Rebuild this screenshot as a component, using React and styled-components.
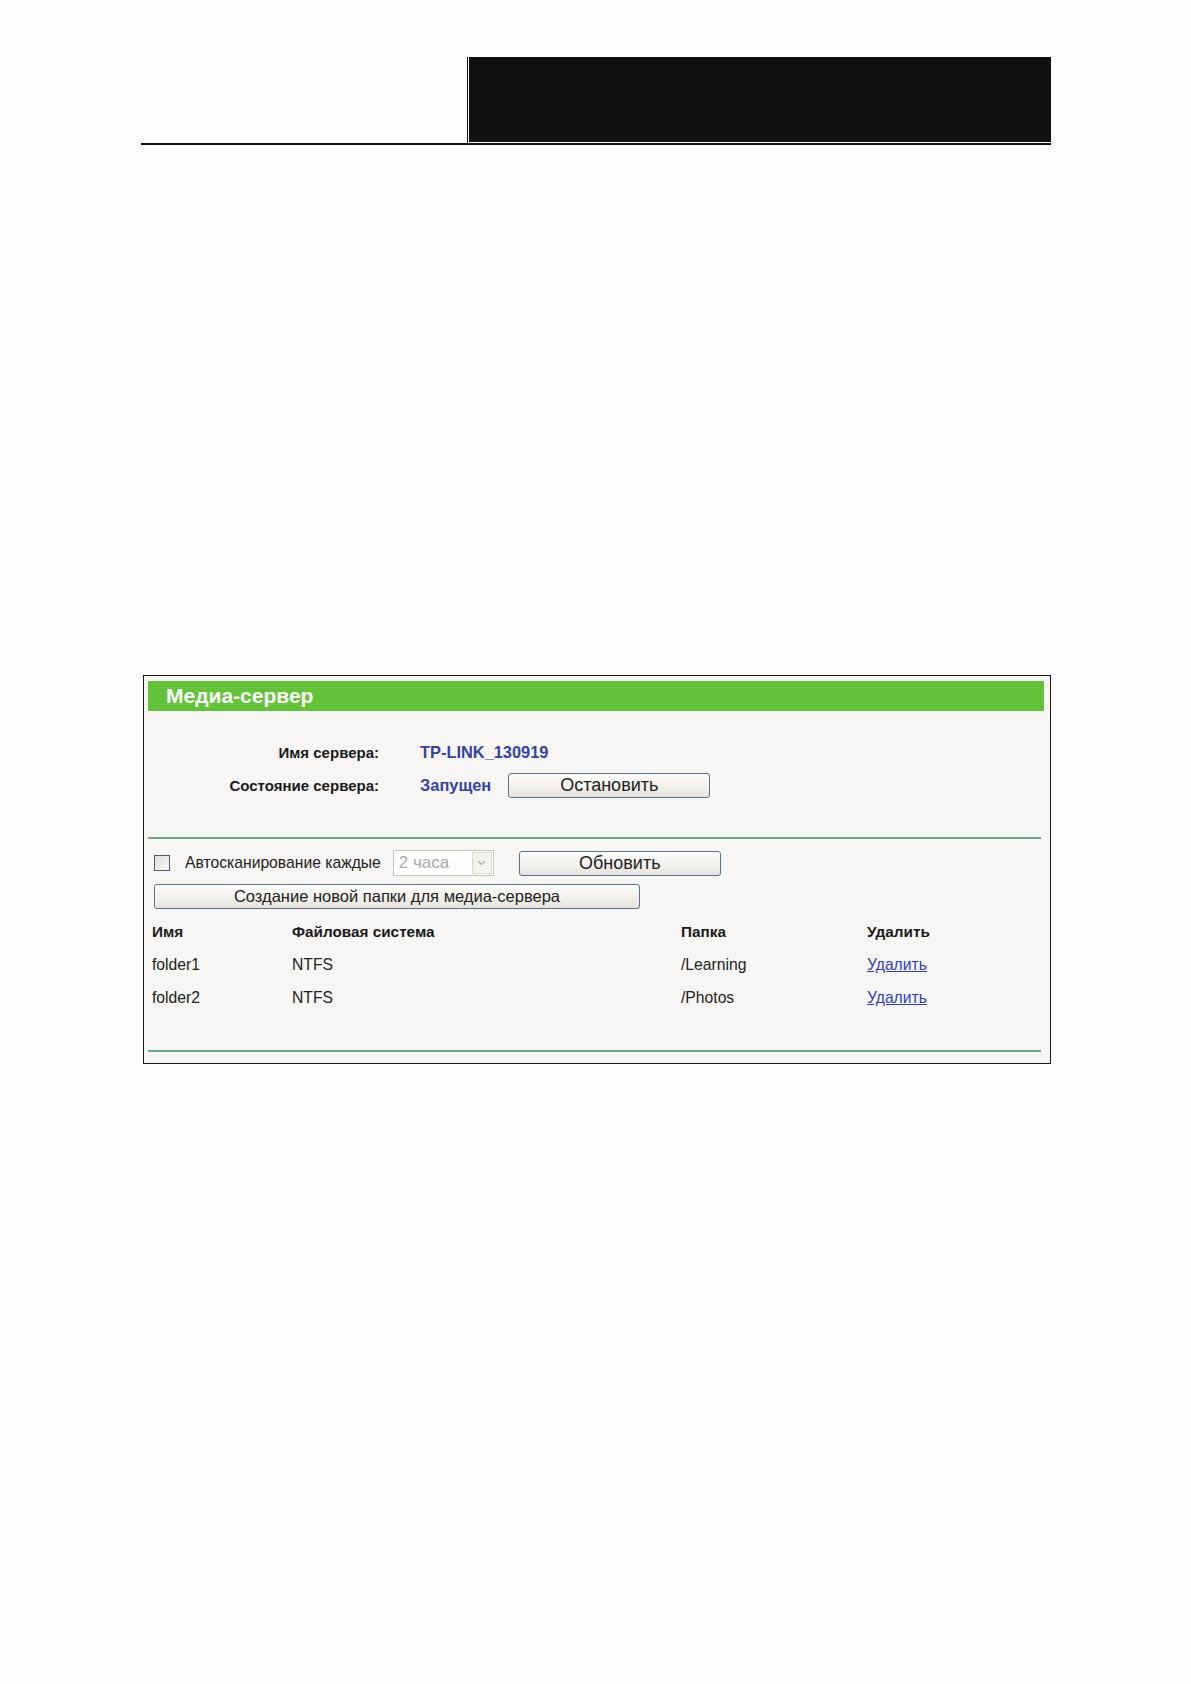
import React from "react";
import styled, { createGlobalStyle } from "styled-components";

const GlobalStyle = createGlobalStyle`
  body {
    margin: 0;
    background: #fdfdfd;
    font-family: "Liberation Sans", Arial, sans-serif;
  }
`;

const Page = styled.div`
  width: 1191px;
  min-height: 1684px;
  padding: 57px 140px 0 141px;
  box-sizing: border-box;
`;

const Header = styled.div`
  display: flex;
  justify-content: flex-end;
  border-bottom: 2px solid #111;
`;

const HeaderBox = styled.div`
  width: 584px;
  height: 86px;
  background: #121110;
  box-shadow: inset 1px 0 #111, inset 2px 0 #fff, inset 0 -1px #fff;
`;

const Panel = styled.div`
  margin: 530px 0 0 2px;
  border: 1px solid #1a1a1a;
  background: #f7f6f4;
  padding: 5px 6px 11px 4px;
`;

const TitleBar = styled.div`
  height: 30px;
  background: #62c338;
  color: #fff;
  font-weight: bold;
  font-size: 21px;
  line-height: 30px;
  padding-left: 18px;
`;

const InfoGrid = styled.div`
  display: grid;
  grid-template-columns: 231px auto;
  column-gap: 41px;
  row-gap: 8px;
  align-items: center;
  padding: 29px 0 39px;
`;

const Label = styled.div`
  text-align: right;
  font-weight: bold;
  font-size: 15px;
  color: #1a1a1a;
`;

const Value = styled.div`
  display: flex;
  align-items: center;
  gap: 17px;
  font-weight: bold;
  font-size: 16.4px;
  color: #3444a2;
  min-height: 25px;
`;

const Divider = styled.div`
  height: 2px;
  background: #6aa985;
  margin-right: 3px;
`;

const Button = styled.button`
  width: ${(p) => p.$w}px;
  height: 25px;
  border: 1px solid #5a7391;
  border-radius: 3px;
  background: linear-gradient(#fdfdfc, #f1efea 60%, #e6e3dc);
  font-family: "Liberation Sans", Arial, sans-serif;
  font-weight: normal;
  font-size: ${(p) => p.$fs || 18}px;
  line-height: 23px;
  color: #222;
  padding: 0;
  cursor: pointer;
`;

const Controls = styled.div`
  display: flex;
  flex-direction: column;
  gap: 8px;
  padding: 11px 0 0 6px;
`;

const ControlRow = styled.div`
  display: flex;
  align-items: center;
`;

const Checkbox = styled.span`
  width: 14px;
  height: 14px;
  border: 1px solid #46607e;
  background: linear-gradient(135deg, #dedbd4, #fbfbfa);
  margin-right: 15px;
`;

const SmallText = styled.span`
  font-size: 15.7px;
  color: #222;
`;

const Select = styled.div`
  display: flex;
  align-items: center;
  width: 101px;
  height: 26px;
  border: 1px solid #c9c5b8;
  background: #fff;
  margin: 0 25px 0 12px;
  box-sizing: border-box;
  padding: 1px;
`;

const SelectText = styled.span`
  flex: 1;
  font-size: 17px;
  color: #a9a9a9;
  padding-left: 4px;
`;

const SelectArrow = styled.span`
  width: 20px;
  height: 22px;
  border: 1px solid #dcd9d0;
  background: #f4f3ef;
  display: flex;
  align-items: center;
  justify-content: center;
  box-sizing: border-box;
`;

const Table = styled.div`
  display: grid;
  grid-template-columns: 140px 389px 186px 1fr;
  padding: 14px 0 44px 4px;
  row-gap: 16px;
`;

const Th = styled.div`
  font-weight: bold;
  font-size: 15.3px;
  color: #1a1a1a;
  line-height: 17px;
`;

const Td = styled.div`
  font-size: 15.7px;
  color: #222;
  line-height: 17px;
`;

const DeleteLink = styled.a`
  font-size: 15.7px;
  line-height: 17px;
  color: #2d3fc1;
  text-decoration: underline;
  cursor: pointer;
`;

const folders = [
  { name: "folder1", fs: "NTFS", path: "/Learning" },
  { name: "folder2", fs: "NTFS", path: "/Photos" },
];

export default function App() {
  return (
    <>
      <GlobalStyle />
      <Page>
        <Header>
          <HeaderBox />
        </Header>

        <Panel>
          <TitleBar>Медиа-сервер</TitleBar>

          <InfoGrid>
            <Label>Имя сервера:</Label>
            <Value>TP-LINK_130919</Value>
            <Label>Состояние сервера:</Label>
            <Value>
              Запущен
              <Button $w={202}>Остановить</Button>
            </Value>
          </InfoGrid>

          <Divider />

          <Controls>
            <ControlRow>
              <Checkbox />
              <SmallText>Автосканирование каждые</SmallText>
              <Select>
                <SelectText>2 часа</SelectText>
                <SelectArrow>
                  <svg width="9" height="6" viewBox="0 0 9 6">
                    <path d="M1 1l3.5 3.5L8 1" fill="none" stroke="#b9b6ad" strokeWidth="1.4" />
                  </svg>
                </SelectArrow>
              </Select>
              <Button $w={202}>Обновить</Button>
            </ControlRow>
            <Button $w={486} $fs={16.5}>Создание новой папки для медиа-сервера</Button>
          </Controls>

          <Table>
            <Th>Имя</Th>
            <Th>Файловая система</Th>
            <Th>Папка</Th>
            <Th>Удалить</Th>
            {folders.map((f) => (
              <React.Fragment key={f.name}>
                <Td>{f.name}</Td>
                <Td>{f.fs}</Td>
                <Td>{f.path}</Td>
                <Td>
                  <DeleteLink>Удалить</DeleteLink>
                </Td>
              </React.Fragment>
            ))}
          </Table>

          <Divider />
        </Panel>
      </Page>
    </>
  );
}
